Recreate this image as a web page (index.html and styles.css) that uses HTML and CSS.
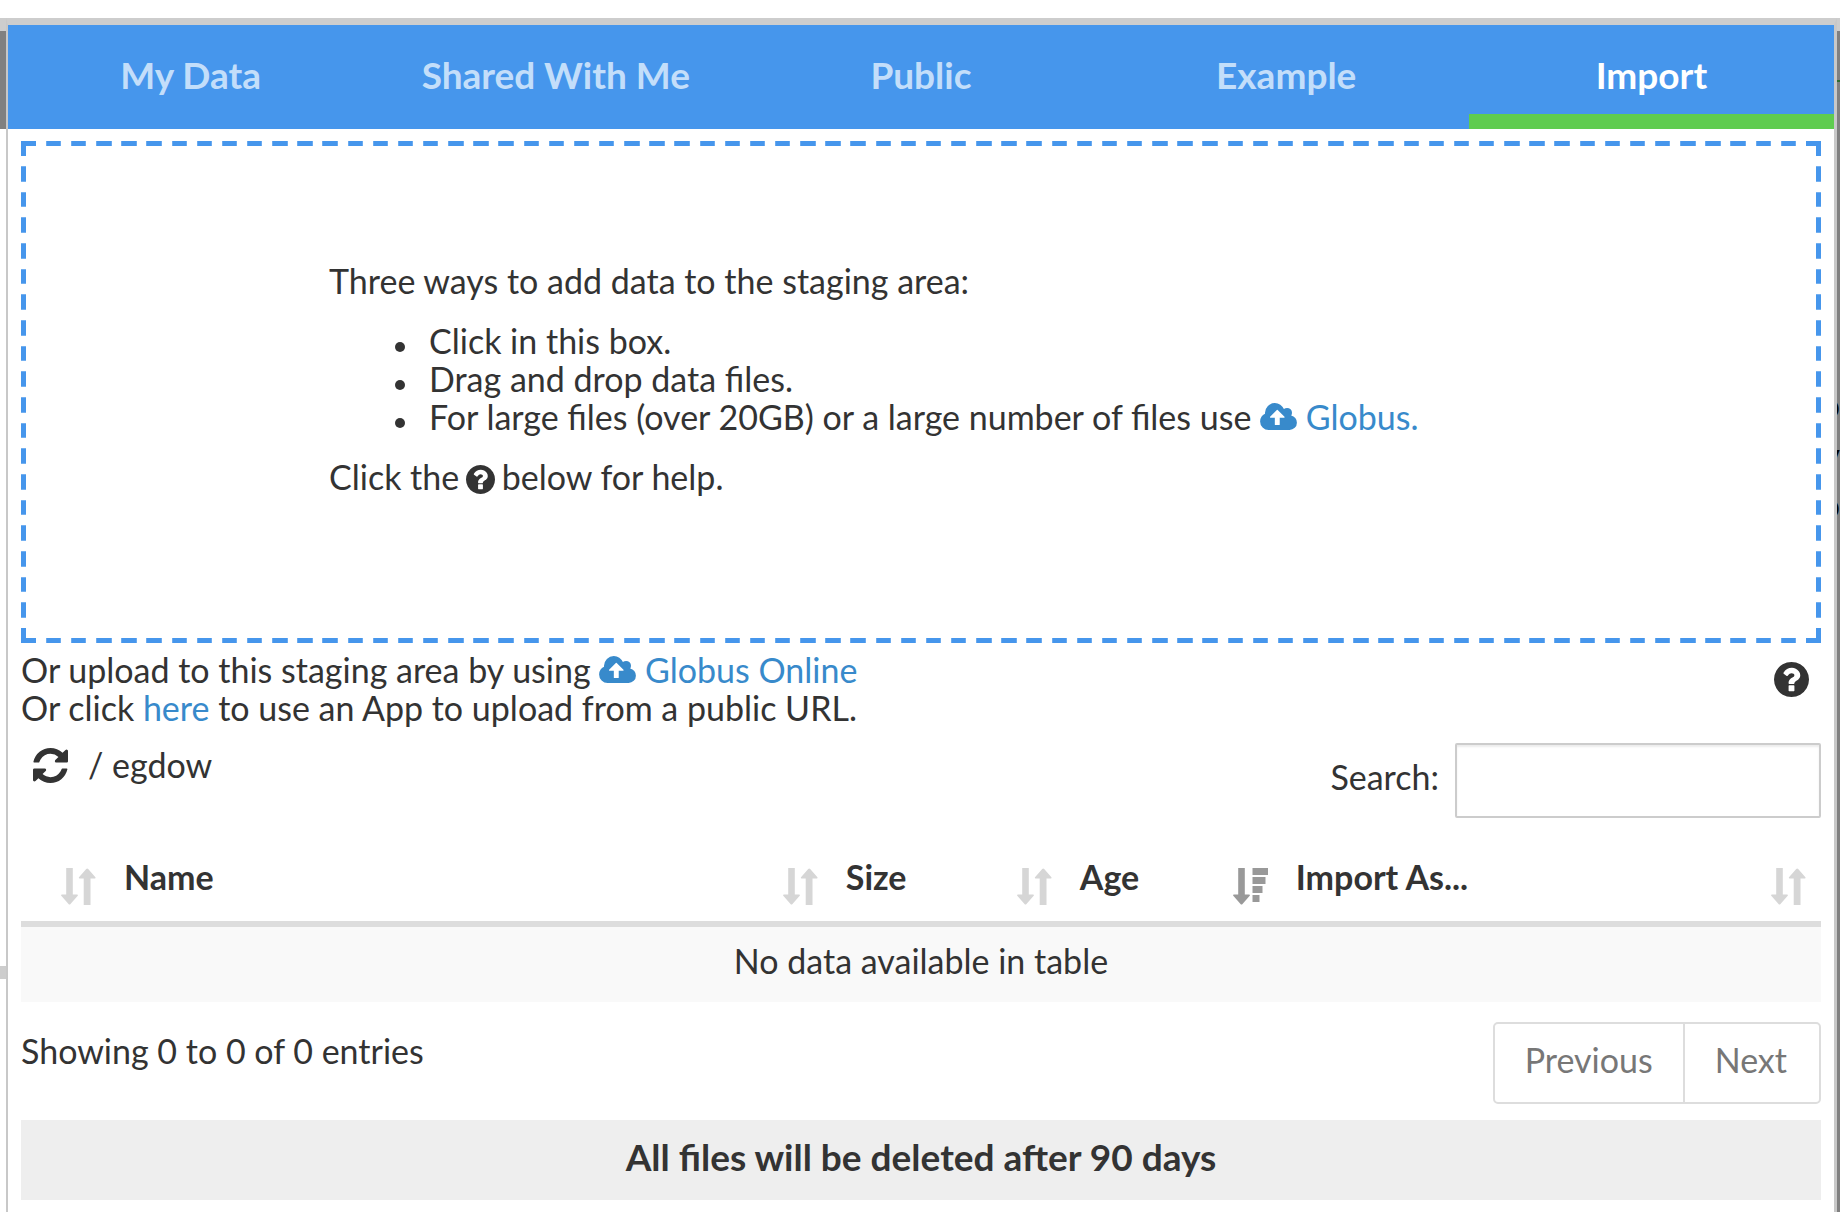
FILE: index.html
```html
<!DOCTYPE html>
<html lang="en">
<head>
<meta charset="utf-8">
<title>Import data</title>
<link rel="stylesheet" href="styles.css">
</head>
<body>
<svg class="sprite" aria-hidden="true">
  <symbol id="cloud-upload" viewBox="-64 128 1920 1408"><path d="M1216 864q0-14-9-23l-352-352q-9-9-23-9t-23 9l-351 351q-10 12-10 24 0 14 9 23t23 9h224v352q0 13 9.500 22.500t22.500 9.500h192q13 0 22.500-9.500t9.500-22.500v-352h224q13 0 22.500-9.500t9.500-22.500zm640 288q0 159-112.500 271.500t-271.500 112.500h-1088q-185 0-316.500-131.500t-131.500-316.500q0-130 70-240t188-165q-2-30-2-43 0-212 150-362t362-150q156 0 285.500 87t188.500 231q71-62 166-62 106 0 181 75t75 181q0 76-41 138 130 31 213.500 135.500t83.500 238.500z"/></symbol>
  <symbol id="question" viewBox="128 128 1536 1536"><path d="M1024 1376v-192q0-14-9-23t-23-9h-192q-14 0-23 9t-9 23v192q0 14 9 23t23 9h192q14 0 23-9t9-23zm256-672q0-88-55.500-163t-138.500-116-170-41q-243 0-371 213-15 24 8 42l132 100q7 6 19 6 16 0 25-12 53-68 86-92 34-24 86-24 48 0 85.500 26t37.500 59q0 38-20 61t-68 45q-63 28-115.500 86.500t-52.500 125.500v36q0 14 9 23t23 9h192q14 0 23-9t9-23q0-19 21.500-49.500t54.500-49.500q32-18 49-28.500t46-35 44.500-48 28-60.500 12.500-81zm384 192q0 209-103 385.500t-279.500 279.500-385.500 103-385.500-103-279.500-279.500-103-385.500 103-385.500 279.500-279.500 385.500-103 385.500 103 279.500 279.500 103 385.500z"/></symbol>
  <symbol id="refresh" viewBox="128 128 1536 1536"><path d="M1639 1056q0 5-1 7-64 268-268 434.500t-478 166.500q-146 0-282.500-55t-243.500-157l-129 129q-19 19-45 19t-45-19-19-45v-448q0-26 19-45t45-19h448q26 0 45 19t19 45-19 45l-137 137q71 66 161 102t187 36q134 0 250-65t186-179q11-17 53-117 8-23 30-23h192q13 0 22.500 9.500t9.500 22.500zm25-800v448q0 26-19 45t-45 19h-448q-26 0-45-19t-19-45 19-45l138-138q-148-137-349-137-134 0-250 65t-186 179q-11 17-53 117-8 23-30 23h-199q-13 0-22.500-9.500t-9.500-22.500v-7q65-268 270-434.500t480-166.500q146 0 284 55.500t245 156.500l130-129q19-19 45-19t45 19 19 45z"/></symbol>
  <symbol id="sort-both" viewBox="0 0 35 37"><path d="M5.200 0h6.600v26.500h4.400q1.200.4.300 1.500l-7 8q-1 1.200-2 0l-7-8q-.9-1.100.3-1.500h4.400z"/><path d="M22.700 37h6.800V10.500h4.400q1.200-.4.300-1.500l-7-8q-1-1.200-2 0l-7 8q-.9 1.100.3 1.500h4.200z"/></symbol>
  <symbol id="sort-desc" viewBox="0 0 35 37"><path d="M5.200 0h6.600v26.500h4.400q1.200.4.300 1.500l-7 8q-1 1.200-2 0l-7-8q-.9-1.100.3-1.500h4.400z"/><path d="M19.500 0h16v7h-16zM19.500 9h13v7h-13zM19.500 18h10v7h-10zM19.500 27h7v7h-7z"/></symbol>
</svg>

<div class="page">
  <div class="backdrop backdrop-left"></div>
  <main class="panel">
    <nav class="tabs" role="tablist">
      <button class="tab" type="button" role="tab">My Data</button>
      <button class="tab" type="button" role="tab">Shared With Me</button>
      <button class="tab" type="button" role="tab">Public</button>
      <button class="tab" type="button" role="tab">Example</button>
      <button class="tab active" type="button" role="tab" aria-selected="true">Import</button>
    </nav>

    <div class="content">
      <section class="dropzone">
        <p>Three ways to add data to the staging area:</p>
        <ul>
          <li>Click in this box.</li>
          <li>Drag and drop data files.</li>
          <li>For large files (over 20GB) or a large number of files use <a href="#globus"><svg class="cloud"><use href="#cloud-upload"/></svg> Globus.</a></li>
        </ul>
        <p>Click the <svg class="help-inline"><use href="#question"/></svg> below for help.</p>
      </section>

      <div class="hints">
        <div>
          <div>Or upload to this staging area by using <a href="#globus"><svg class="cloud"><use href="#cloud-upload"/></svg> Globus Online</a></div>
          <div>Or click <a href="#app">here</a> to use an App to upload from a public URL.</div>
        </div>
        <button class="icon-button help" type="button" aria-label="Help"><svg><use href="#question"/></svg></button>
      </div>

      <div class="toolbar">
        <div class="path">
          <button class="icon-button" type="button" aria-label="Refresh"><svg><use href="#refresh"/></svg></button>
          <span>/ <span class="folder">egdow</span></span>
        </div>
        <div class="search">
          <label for="search">Search:</label>
          <input id="search" type="search">
        </div>
      </div>

      <table class="files">
        <colgroup><col class="c-expand"><col class="c-name"><col class="c-size"><col class="c-age"><col></colgroup>
        <thead>
          <tr>
            <th><div class="head"><span></span><svg><use href="#sort-both"/></svg></div></th>
            <th><div class="head"><span>Name</span><svg><use href="#sort-both"/></svg></div></th>
            <th><div class="head"><span>Size</span><svg><use href="#sort-both"/></svg></div></th>
            <th aria-sort="descending"><div class="head"><span>Age</span><svg class="sorted"><use href="#sort-desc"/></svg></div></th>
            <th><div class="head"><span>Import As...</span><svg><use href="#sort-both"/></svg></div></th>
          </tr>
        </thead>
        <tbody>
          <tr><td colspan="5">No data available in table</td></tr>
        </tbody>
      </table>

      <div class="footer">
        <div>Showing 0 to 0 of 0 entries</div>
        <div class="pager">
          <button type="button">Previous</button>
          <button type="button">Next</button>
        </div>
      </div>

      <div class="notice">All files will be deleted after 90 days</div>
    </div>
  </main>
  <div class="backdrop backdrop-right"><span>o</span><span>v</span><span>o</span></div>
</div>
</body>
</html>
```
FILE: styles.css
```css
* { box-sizing: border-box; }

body {
  margin: 0;
  background: #fff;
  color: #333;
  font: 34px/38px Lato, "Noto Sans", sans-serif;
}

button, input { font: inherit; color: inherit; }
p, ul { margin: 0; }
svg { fill: currentColor; }
a { color: #388acb; text-decoration: none; }
.sprite { display: none; }

.page {
  display: grid;
  grid-template-columns: 6px 1fr 3px;
  min-height: 100vh;
  padding-top: 18px;
}

/* slivers of the page behind the panel */
.backdrop-left {
  background: linear-gradient(#cdcdcd 13px, #808080 13px 111px, #fff 111px 948px, #cdcdcd 948px 961px, #fff 961px);
}
.backdrop-right {
  display: flex;
  flex-direction: column;
  align-items: flex-end;
  overflow: hidden;
  padding-top: 362px;
  background: linear-gradient(#cdcdcd 13px, #808080 13px 62px, #2f6b2f 62px 64px, #808080 64px);
  color: #000;
  line-height: 50px;
}

.panel {
  min-width: 0;
  border: solid #c8c8c8;
  border-width: 7px 3px 0 2px;
  border-top-color: #cdcdcd;
  background: #fff;
}

.tabs { display: grid; grid-template-columns: repeat(5, 1fr); background: #4696ec; }
.tab {
  height: 104px;
  padding: 11px 0 0;
  border: 0;
  border-bottom: 15px solid transparent;
  background: none;
  color: #c3defa;
  font-size: 37px;
  font-weight: 700;
}
.tab.active { border-bottom-color: #5fcc4f; color: #fff; }

.content { padding: 12px 13px 0; }

.dropzone {
  padding: 116px 60px 142px 303px;
  border: 5px solid transparent;
  border-image: url("data:image/svg+xml,%3Csvg xmlns='http://www.w3.org/2000/svg' width='65' height='65' fill='none' stroke='%234696ec' stroke-width='5'%3E%3Cpath d='M0 2.5h15M25 2.500h15M50 2.500h15M0 62.500h15M25 62.500h15M50 62.500h15M2.500 0v15M2.500 25v15M2.500 50v15M62.500 0v15M62.500 25v15M62.500 50v15'/%3E%3C/svg%3E") 20 / 20px round;
}
.dropzone ul { margin: 22px 0; padding-left: 100px; list-style: none; }
.dropzone li { position: relative; }
.dropzone li::before {
  content: "";
  position: absolute;
  top: 20px;
  left: -34px;
  width: 10px;
  height: 10px;
  border-radius: 50%;
  background: currentColor;
}
.cloud { width: 37px; height: 27px; }
.help-inline { width: 29px; height: 29px; margin: 0 -2px; vertical-align: -4px; }

.hints { display: flex; justify-content: space-between; align-items: center; padding-top: 8px; }
.icon-button { padding: 0; border: 0; background: none; }
.icon-button svg { display: block; width: 35px; height: 35px; }
.help { margin: 0 12px 20px; }

.toolbar { display: flex; justify-content: space-between; padding-top: 16px; }
.path { display: flex; align-items: center; gap: 20px; height: 44px; padding-left: 12px; }
.search { display: flex; align-items: center; gap: 16px; }
.search label { padding-bottom: 8px; }
.search input {
  width: 366px;
  height: 75px;
  padding: 0 20px;
  border: 2px solid #ccc;
  border-radius: 2px;
  outline: 0;
  background: #fff;
  box-shadow: inset 0 2px 2px rgba(0, 0, 0, .08);
  -webkit-appearance: none;
  appearance: none;
}

.files { width: 100%; margin-top: 40px; border-collapse: collapse; table-layout: fixed; }
.c-expand { width: 5%; }
.c-name { width: 40.1%; }
.c-size { width: 13%; }
.c-age { width: 12%; }
.files thead { border-bottom: 6px solid #ddd; }
.files th { padding: 0 15px 16px 13px; text-align: left; vertical-align: bottom; }
.head { display: flex; justify-content: space-between; align-items: flex-end; }
.head span { padding-bottom: 9px; }
.head svg { width: 35px; height: 37px; color: #d6d6d6; }
.head .sorted { color: #999; }
.files td { padding: 15px 13px 22px; background: #f9f9f9; text-align: center; }

.footer { display: flex; justify-content: space-between; padding-top: 20px; }
.footer > div:first-child { padding-top: 10px; }
.pager { display: flex; }
.pager button {
  height: 82px;
  padding: 0 30px 6px;
  border: 2px solid #ddd;
  background: #fff;
  color: #777;
}
.pager button:first-child { border-radius: 5px 0 0 5px; }
.pager button:last-child { margin-left: -2px; padding-right: 32px; border-radius: 0 5px 5px 0; }

.notice {
  margin-top: 16px;
  padding: 18px 0 24px;
  background: #eee;
  font-size: 37px;
  font-weight: 700;
  text-align: center;
}
```
